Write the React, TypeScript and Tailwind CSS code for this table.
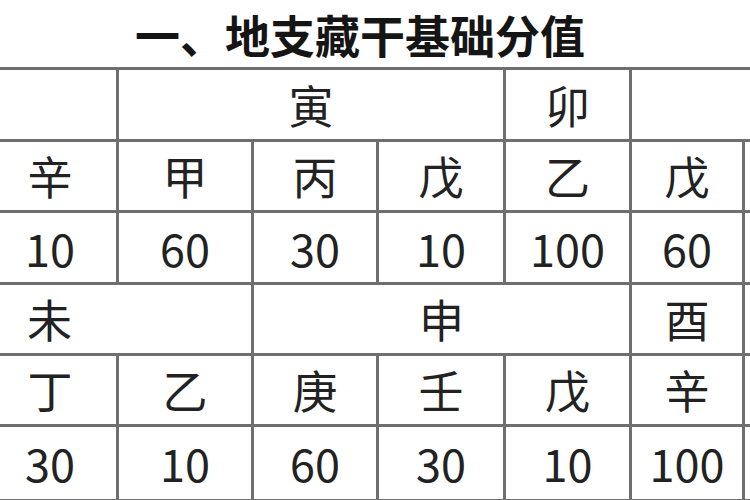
import React from "react";

const font = { fontFamily: '"Noto Sans CJK SC", "Noto Sans", sans-serif' };

type Cell = { t: string; span?: number };

const rows: Cell[][] = [
  [{ t: "", span: 2 }, { t: "寅", span: 3 }, { t: "卯" }, { t: "", span: 2 }],
  [{ t: "" }, { t: "辛" }, { t: "甲" }, { t: "丙" }, { t: "戊" }, { t: "乙" }, { t: "戊" }, { t: "" }],
  [{ t: "" }, { t: "10" }, { t: "60" }, { t: "30" }, { t: "10" }, { t: "100" }, { t: "60" }, { t: "" }],
  [{ t: "未", span: 3 }, { t: "申", span: 3 }, { t: "酉" }, { t: "" }],
  [{ t: "" }, { t: "丁" }, { t: "乙" }, { t: "庚" }, { t: "壬" }, { t: "戊" }, { t: "辛" }, { t: "" }],
  [{ t: "" }, { t: "30" }, { t: "10" }, { t: "60" }, { t: "30" }, { t: "10" }, { t: "100" }, { t: "" }],
];

const spanClass: Record<number, string> = {
  1: "col-span-1",
  2: "col-span-2",
  3: "col-span-3",
};

export default function App() {
  return (
    <div className="w-[750px] h-[500px] overflow-hidden bg-white" style={font}>
      <div className="h-[67px] flex items-center pl-[135px] pt-[2px] text-[45px] font-bold text-[#151515] leading-[60px] whitespace-nowrap">
        一、地支藏干基础分值
      </div>
      <div className="ml-[-155px] w-max grid grid-cols-[133px_132px_132px_122px_124px_123px_110px_120px] grid-rows-[69px_68px_69px_68px_68px_72px] gap-[3px] p-[3px] bg-[#6f6f6f]">
        {rows.map((r, ri) =>
          r.map((c, ci) => (
            <div
              key={`${ri}-${ci}`}
              className={`${spanClass[c.span ?? 1]} bg-white flex items-center justify-center text-[45px] leading-[60px] text-[#222222]`}
            >
              {c.t}
            </div>
          ))
        )}
      </div>
    </div>
  );
}
